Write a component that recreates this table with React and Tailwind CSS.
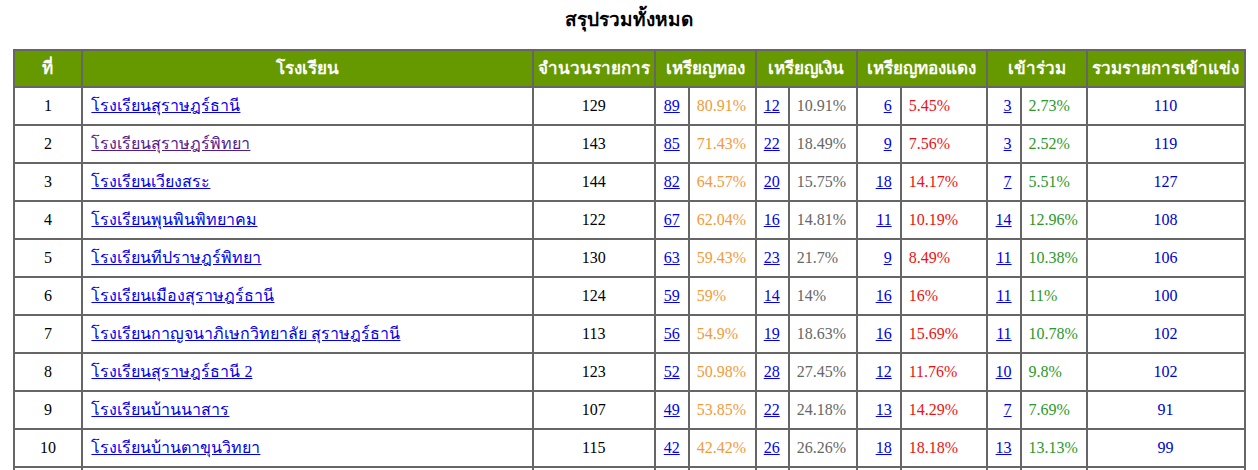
import React from 'react'

const rows = [
  { name: 'โรงเรียนสุราษฎร์ธานี', total: 129, g: 89, gp: '80.91%', s: 12, sp: '10.91%', b: 6, bp: '5.45%', j: 3, jp: '2.73%', sum: 110 },
  { name: 'โรงเรียนสุราษฎร์พิทยา', total: 143, g: 85, gp: '71.43%', s: 22, sp: '18.49%', b: 9, bp: '7.56%', j: 3, jp: '2.52%', sum: 119, visited: true },
  { name: 'โรงเรียนเวียงสระ', total: 144, g: 82, gp: '64.57%', s: 20, sp: '15.75%', b: 18, bp: '14.17%', j: 7, jp: '5.51%', sum: 127 },
  { name: 'โรงเรียนพุนพินพิทยาคม', total: 122, g: 67, gp: '62.04%', s: 16, sp: '14.81%', b: 11, bp: '10.19%', j: 14, jp: '12.96%', sum: 108 },
  { name: 'โรงเรียนทีปราษฎร์พิทยา', total: 130, g: 63, gp: '59.43%', s: 23, sp: '21.7%', b: 9, bp: '8.49%', j: 11, jp: '10.38%', sum: 106 },
  { name: 'โรงเรียนเมืองสุราษฎร์ธานี', total: 124, g: 59, gp: '59%', s: 14, sp: '14%', b: 16, bp: '16%', j: 11, jp: '11%', sum: 100 },
  { name: 'โรงเรียนกาญจนาภิเษกวิทยาลัย สุราษฎร์ธานี', total: 113, g: 56, gp: '54.9%', s: 19, sp: '18.63%', b: 16, bp: '15.69%', j: 11, jp: '10.78%', sum: 102 },
  { name: 'โรงเรียนสุราษฎร์ธานี 2', total: 123, g: 52, gp: '50.98%', s: 28, sp: '27.45%', b: 12, bp: '11.76%', j: 10, jp: '9.8%', sum: 102 },
  { name: 'โรงเรียนบ้านนาสาร', total: 107, g: 49, gp: '53.85%', s: 22, sp: '24.18%', b: 13, bp: '14.29%', j: 7, jp: '7.69%', sum: 91 },
  { name: 'โรงเรียนบ้านตาขุนวิทยา', total: 115, g: 42, gp: '42.42%', s: 26, sp: '26.26%', b: 18, bp: '18.18%', j: 13, jp: '13.13%', sum: 99 },
]

const cell = 'border-2 border-[#666666] h-[38px] p-0'
const head = 'border-2 border-[#666666] h-[37px] p-0'

const Num = ({ v }) => (
  <td className={`${cell} text-right pr-2`}>
    <a href="#" className="text-[#0000ee] underline">{v}</a>
  </td>
)

export default function App() {
  return (
    <div className="bg-white h-[470px] overflow-hidden font-['Liberation_Serif','Tahoma','Noto_Sans',serif] text-[16px] text-black">
      <h1 className="text-center font-bold text-[19px] font-['Tahoma','DejaVu_Sans','Noto_Sans',sans-serif] pt-[4px] pb-[15px] leading-[30px]">
        สรุปรวมทั้งหมด
      </h1>
      <table className="w-[1233px] mx-auto border-collapse border-2 border-[#666666]">
        <colgroup>
          <col className="w-[69px]" />
          <col className="w-[451px]" />
          <col className="w-[122px]" />
          <col className="w-[34px]" />
          <col className="w-[67px]" />
          <col className="w-[33px]" />
          <col className="w-[68px]" />
          <col className="w-[44px]" />
          <col className="w-[86px]" />
          <col className="w-[34px]" />
          <col className="w-[66px]" />
          <col className="w-[158px]" />
        </colgroup>
        <thead>
          <tr className="bg-[#669900] text-white font-bold text-[17px] font-['Tahoma','DejaVu_Sans','Noto_Sans',sans-serif]">
            <th className={head}>ที่</th>
            <th className={head}>โรงเรียน</th>
            <th className={head}>จำนวนรายการ</th>
            <th colSpan={2} className={head}>เหรียญทอง</th>
            <th colSpan={2} className={head}>เหรียญเงิน</th>
            <th colSpan={2} className={head}>เหรียญทองแดง</th>
            <th colSpan={2} className={head}>เข้าร่วม</th>
            <th className={head}>รวมรายการเข้าแข่ง</th>
          </tr>
        </thead>
        <tbody>
          {rows.map((r, i) => (
            <tr key={i}>
              <td className={`${cell} text-center`}>{i + 1}</td>
              <td className={`${cell} pl-2`}>
                <a href="#" className={`underline ${r.visited ? 'text-[#551a8b]' : 'text-[#0000ee]'}`}>{r.name}</a>
              </td>
              <td className={`${cell} text-center`}>{r.total}</td>
              <Num v={r.g} />
              <td className={`${cell} pl-[7px] text-[#f39a3a]`}>{r.gp}</td>
              <Num v={r.s} />
              <td className={`${cell} pl-[7px] text-[#666666]`}>{r.sp}</td>
              <Num v={r.b} />
              <td className={`${cell} pl-[7px] text-[#ee1111]`}>{r.bp}</td>
              <Num v={r.j} />
              <td className={`${cell} pl-[7px] text-[#2a992a]`}>{r.jp}</td>
              <td className={`${cell} text-center text-[#0000cc]`}>{r.sum}</td>
            </tr>
          ))}
          <tr>
            {Array.from({ length: 12 }).map((_, k) => (
              <td key={k} className={cell}></td>
            ))}
          </tr>
        </tbody>
      </table>
    </div>
  )
}
